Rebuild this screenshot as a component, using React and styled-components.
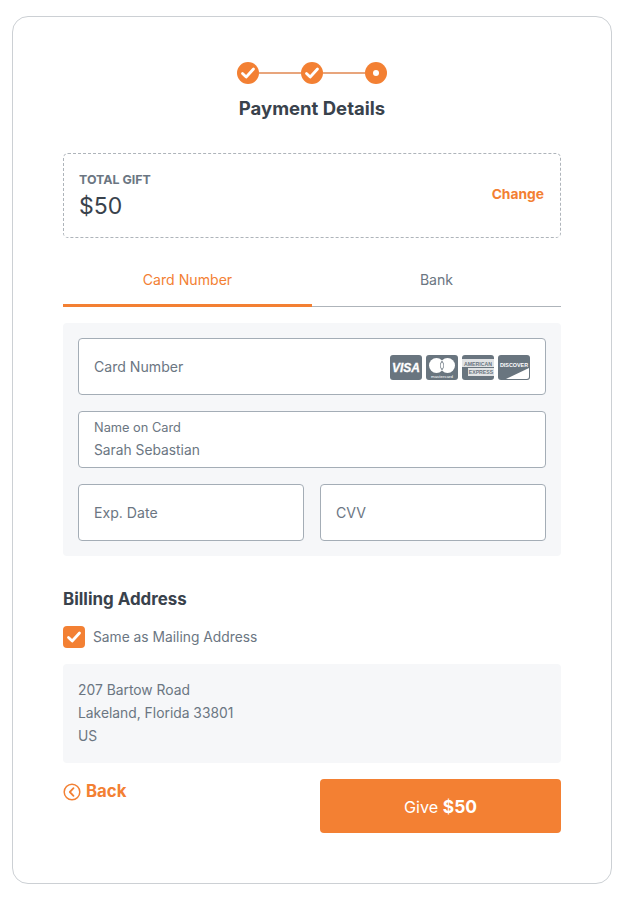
import React from 'react';
import styled, { createGlobalStyle } from 'styled-components';

const orange = '#f38033';

const GlobalStyle = createGlobalStyle`
  html, body {
    margin: 0;
    background: #fff;
    font-family: 'Inter', 'Liberation Sans', sans-serif;
    color: #6b7682;
  }
  * { box-sizing: border-box; }
`;

const Page = styled.div`
  padding: 16px 13px 16px 12px;
`;

const Card = styled.div`
  height: 868px;
  border: 1px solid #ccd0d4;
  border-radius: 16px;
  padding: 45px 50px 0;
  display: flex;
  flex-direction: column;
`;

const Stepper = styled.div`
  display: flex;
  justify-content: center;
  align-items: center;
`;

const StepDot = styled.div`
  width: 22px;
  height: 22px;
  border-radius: 50%;
  background: ${orange};
  display: flex;
  align-items: center;
  justify-content: center;
`;

const StepLine = styled.div`
  width: 42px;
  height: 2px;
  background: #e8a57c;
`;

const CurrentDot = styled.div`
  width: 6px;
  height: 6px;
  border-radius: 50%;
  background: #fff;
`;

const Title = styled.h1`
  margin: 11px 0 0;
  height: 26px;
  line-height: 26px;
  text-align: center;
  font-size: 18.5px;
  font-weight: 700;
  color: #39424c;
`;

const GiftBox = styled.div`
  margin-top: 32px;
  height: 85px;
  border: 1px dashed #aeb4ba;
  border-radius: 5px;
  padding: 0 16px 0 15px;
  display: flex;
  align-items: center;
  justify-content: space-between;
`;

const GiftLabel = styled.div`
  padding-top: 1px;
  font-size: 12.4px;
  line-height: 16px;
  font-weight: 700;
  color: #6b7682;
`;

const GiftAmount = styled.div`
  margin-top: 3px;
  font-size: 23px;
  line-height: 30px;
  color: #39424c;
`;

const ChangeLink = styled.a`
  margin-bottom: 3px;
  font-size: 13.8px;
  font-weight: 700;
  color: ${orange};
`;

const Tabs = styled.div`
  margin-top: 24px;
  display: grid;
  grid-template-columns: 249px 249px;
  border-bottom: 1px solid #aeb4ba;
`;

const Tab = styled.div`
  height: 45px;
  margin-bottom: -1px;
  padding-top: 9px;
  text-align: center;
  font-size: 14.1px;
  line-height: 18px;
  color: ${({ $active }) => ($active ? orange : '#6b7682')};
  border-bottom: 3px solid ${({ $active }) => ($active ? orange : 'transparent')};
`;

const CardPanel = styled.div`
  margin-top: 16px;
  padding: 15px;
  background: #f6f7f9;
  border-radius: 4px;
  display: flex;
  flex-direction: column;
  gap: 16px;
`;

const Field = styled.div`
  height: 57px;
  flex: ${({ $half }) => ($half ? 1 : 'none')};
  background: #fff;
  border: 1px solid #a4adb6;
  border-radius: 4px;
  padding: 0 15px;
  display: flex;
  align-items: center;
  justify-content: space-between;
`;

const FilledField = styled(Field)`
  flex-direction: column;
  align-items: flex-start;
  justify-content: flex-start;
  padding-top: 7px;
`;

const Placeholder = styled.span`
  margin-bottom: 1px;
  font-size: 14.1px;
  color: #6b7682;
`;

const SmallLabel = styled.div`
  font-size: 12.8px;
  line-height: 17px;
  color: #6b7682;
`;

const FieldValue = styled.div`
  margin-top: 5px;
  font-size: 13.8px;
  line-height: 18px;
  color: #6b7682;
`;

const FieldRow = styled.div`
  display: flex;
  gap: 16px;
`;

const CardLogos = styled.div`
  margin-top: 1px;
  display: flex;
  gap: 4px;
`;

const LogoSvg = styled.svg`
  display: block;
  width: 32px;
  height: 25px;
`;

const BillingTitle = styled.h2`
  margin: 33px 0 0;
  font-size: 16.9px;
  line-height: 20px;
  font-weight: 700;
  color: #39424c;
`;

const CheckRow = styled.div`
  margin-top: 17px;
  display: flex;
  align-items: center;
  gap: 8px;
  font-size: 13.8px;
`;

const CheckBox = styled.div`
  width: 22px;
  height: 22px;
  border-radius: 4px;
  background: ${orange};
  display: flex;
  align-items: center;
  justify-content: center;
`;

const AddressBox = styled.div`
  margin-top: 16px;
  height: 99px;
  padding: 15px;
  background: #f6f7f9;
  border-radius: 4px;
  font-size: 13.85px;
  line-height: 23px;
`;

const Footer = styled.div`
  margin-top: 16px;
  display: flex;
  justify-content: space-between;
  align-items: flex-start;
`;

const BackLink = styled.a`
  margin-top: 1px;
  display: flex;
  align-items: center;
  gap: 5px;
  font-size: 16.8px;
  line-height: 22px;
  font-weight: 700;
  color: ${orange};
`;

const BackGlyph = styled.svg`
  margin-top: 2px;
`;

const GiveButton = styled.button`
  width: 241px;
  height: 54px;
  border: none;
  border-radius: 4px;
  background: ${orange};
  color: #fff;
  font-family: inherit;
  font-size: 16.2px;
  b { font-weight: 700; font-size: 17.4px; }
`;

const Check = ({ size = 16 }) => (
  <svg width={size} height={size} viewBox="0 0 16 16" fill="none">
    <path d="M2.5 8.5 L6.2 12 L13.5 4" stroke="#fff" strokeWidth="2.8" strokeLinecap="round" strokeLinejoin="round" />
  </svg>
);

const logoBg = '#69757f';

const VisaLogo = () => (
  <LogoSvg viewBox="0 0 32 25">
    <rect width="32" height="25" rx="3" fill={logoBg} />
    <text x="16" y="17" textAnchor="middle" fontFamily="Liberation Sans" fontStyle="italic" fontWeight="700" fontSize="12" stroke="#fff" strokeWidth="0.3" fill="#fff">VISA</text>
  </LogoSvg>
);

const MasterLogo = () => (
  <LogoSvg viewBox="0 0 32 25">
    <rect width="32" height="25" rx="3" fill={logoBg} />
    <circle cx="10.5" cy="10.5" r="7.5" fill="#fff" />
    <circle cx="21.5" cy="10.5" r="7.5" fill="#fff" />
    <path d="M16 5.4 a7.5 7.5 0 0 1 0 10.2 a7.5 7.5 0 0 1 0 -10.2" fill={logoBg} />
    <path d="M16 7 a5.5 5.5 0 0 1 0 7 a5.5 5.5 0 0 1 0 -7" fill="#fff" />
    <text x="16" y="22.5" textAnchor="middle" fontFamily="Liberation Sans" fontSize="4.4" fill="#fff">mastercard</text>
  </LogoSvg>
);

const AmexLogo = () => (
  <LogoSvg viewBox="0 0 32 25">
    <rect width="32" height="25" rx="3" fill={logoBg} />
    <rect y="4" width="32" height="8" fill="#fff" opacity="0.8" />
    <rect x="6" y="13" width="26" height="8" fill="#fff" opacity="0.8" />
    <text x="16" y="10.5" textAnchor="middle" fontFamily="Liberation Sans" fontWeight="700" fontSize="5.2" fill={logoBg}>AMERICAN</text>
    <text x="19" y="19.2" textAnchor="middle" fontFamily="Liberation Sans" fontWeight="700" fontSize="5.2" fill={logoBg}>EXPRESS</text>
  </LogoSvg>
);

const DiscoverLogo = () => (
  <LogoSvg viewBox="0 0 32 25">
    <rect width="32" height="25" rx="3" fill={logoBg} />
    <path d="M8 24 L31 13 V21.5 a2.5 2.5 0 0 1 -2.5 2.5 Z" fill="#fff" />
    <text x="16" y="11.5" textAnchor="middle" fontFamily="Liberation Sans" fontWeight="700" fontSize="5.4" fill="#fff">DISCOVER</text>
  </LogoSvg>
);

const BackIcon = () => (
  <BackGlyph width="18" height="18" viewBox="0 0 18 18" fill="none" stroke={orange}>
    <circle cx="9" cy="9" r="7.8" strokeWidth="1.5" />
    <path d="M10.5 5.2 L6.8 9 L10.5 12.8" strokeWidth="1.8" strokeLinecap="round" strokeLinejoin="round" />
  </BackGlyph>
);

const App = () => {
  return (
    <Page>
      <GlobalStyle />
      <Card>
        <Stepper>
          <StepDot><Check /></StepDot>
          <StepLine />
          <StepDot><Check /></StepDot>
          <StepLine />
          <StepDot><CurrentDot /></StepDot>
        </Stepper>
        <Title>Payment Details</Title>

        <GiftBox>
          <div>
            <GiftLabel>TOTAL GIFT</GiftLabel>
            <GiftAmount>$50</GiftAmount>
          </div>
          <ChangeLink>Change</ChangeLink>
        </GiftBox>

        <Tabs>
          <Tab $active>Card Number</Tab>
          <Tab>Bank</Tab>
        </Tabs>

        <CardPanel>
          <Field>
            <Placeholder>Card Number</Placeholder>
            <CardLogos>
              <VisaLogo />
              <MasterLogo />
              <AmexLogo />
              <DiscoverLogo />
            </CardLogos>
          </Field>
          <FilledField>
            <SmallLabel>Name on Card</SmallLabel>
            <FieldValue>Sarah Sebastian</FieldValue>
          </FilledField>
          <FieldRow>
            <Field $half><Placeholder>Exp. Date</Placeholder></Field>
            <Field $half><Placeholder>CVV</Placeholder></Field>
          </FieldRow>
        </CardPanel>

        <BillingTitle>Billing Address</BillingTitle>
        <CheckRow>
          <CheckBox><Check /></CheckBox>
          Same as Mailing Address
        </CheckRow>
        <AddressBox>
          <div>207 Bartow Road</div>
          <div>Lakeland, Florida 33801</div>
          <div>US</div>
        </AddressBox>

        <Footer>
          <BackLink><BackIcon />Back</BackLink>
          <GiveButton>Give <b>$50</b></GiveButton>
        </Footer>
      </Card>
    </Page>
  );
};

export default App;
